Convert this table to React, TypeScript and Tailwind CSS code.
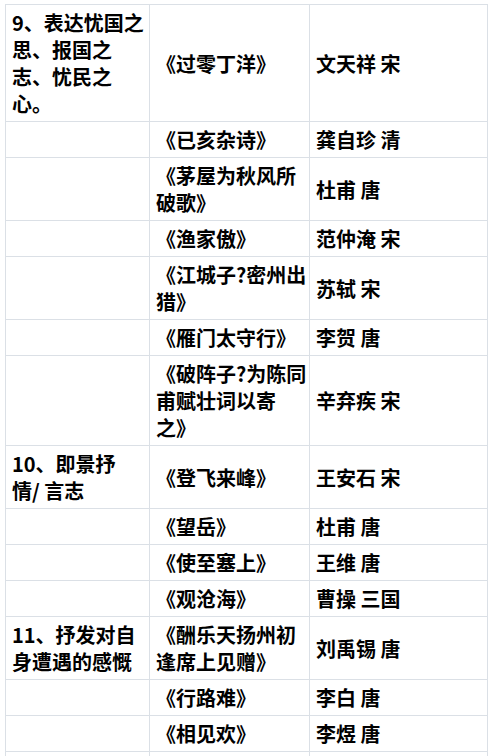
import React from "react";

type Row = { a: string[]; b: string[]; c: string[] };

const rows: Row[] = [
  { a: ["9、表达忧国之", "思、报国之", "志、忧民之", "心。"], b: ["《过零丁洋》"], c: ["文天祥 宋"] },
  { a: [], b: ["《已亥杂诗》"], c: ["龚自珍 清"] },
  { a: [], b: ["《茅屋为秋风所", "破歌》"], c: ["杜甫 唐"] },
  { a: [], b: ["《渔家傲》"], c: ["范仲淹 宋"] },
  { a: [], b: ["《江城子?密州出", "猎》"], c: ["苏轼 宋"] },
  { a: [], b: ["《雁门太守行》"], c: ["李贺 唐"] },
  { a: [], b: ["《破阵子?为陈同", "甫赋壮词以寄", "之》"], c: ["辛弃疾 宋"] },
  { a: ["10、即景抒", "情/ 言志"], b: ["《登飞来峰》"], c: ["王安石 宋"] },
  { a: [], b: ["《望岳》"], c: ["杜甫 唐"] },
  { a: [], b: ["《使至塞上》"], c: ["王维 唐"] },
  { a: [], b: ["《观沧海》"], c: ["曹操 三国"] },
  { a: ["11、抒发对自", "身遭遇的感慨"], b: ["《酬乐天扬州初", "逢席上见赠》"], c: ["刘禹锡 唐"] },
  { a: [], b: ["《行路难》"], c: ["李白 唐"] },
  { a: [], b: ["《相见欢》"], c: ["李煜 唐"] },
  { a: [], b: [], c: [] },
];

function Lines({ lines }: { lines: string[] }) {
  return (
    <>
      {lines.map((l, i) => (
        <div key={i} className="whitespace-pre">
          {l}
        </div>
      ))}
    </>
  );
}

export default function App() {
  return (
    <div
      className="w-[497px] h-[756px] overflow-hidden bg-white pt-[4px] pl-[5px]"
      style={{ fontFamily: '"Noto Sans CJK SC", "Noto Sans", sans-serif' }}
    >
      <table className="border-collapse table-fixed w-[482px] text-[20px] leading-[27px] font-bold text-black">
        <colgroup>
          <col className="w-[144px]" />
          <col className="w-[160px]" />
          <col className="w-[178px]" />
        </colgroup>
        <tbody>
          {rows.map((r, i) => (
            <tr key={i}>
              <td className="border border-[#dbe0e6] align-middle pl-[6px] pr-[2px] py-[4px] h-[36px]">
                <Lines lines={r.a} />
              </td>
              <td className="border border-[#dbe0e6] align-middle pl-[6px] pr-[2px] py-[4px]">
                <Lines lines={r.b} />
              </td>
              <td className="border border-[#dbe0e6] align-middle pl-[6px] pr-[2px] py-[4px]">
                <Lines lines={r.c} />
              </td>
            </tr>
          ))}
        </tbody>
      </table>
    </div>
  );
}
